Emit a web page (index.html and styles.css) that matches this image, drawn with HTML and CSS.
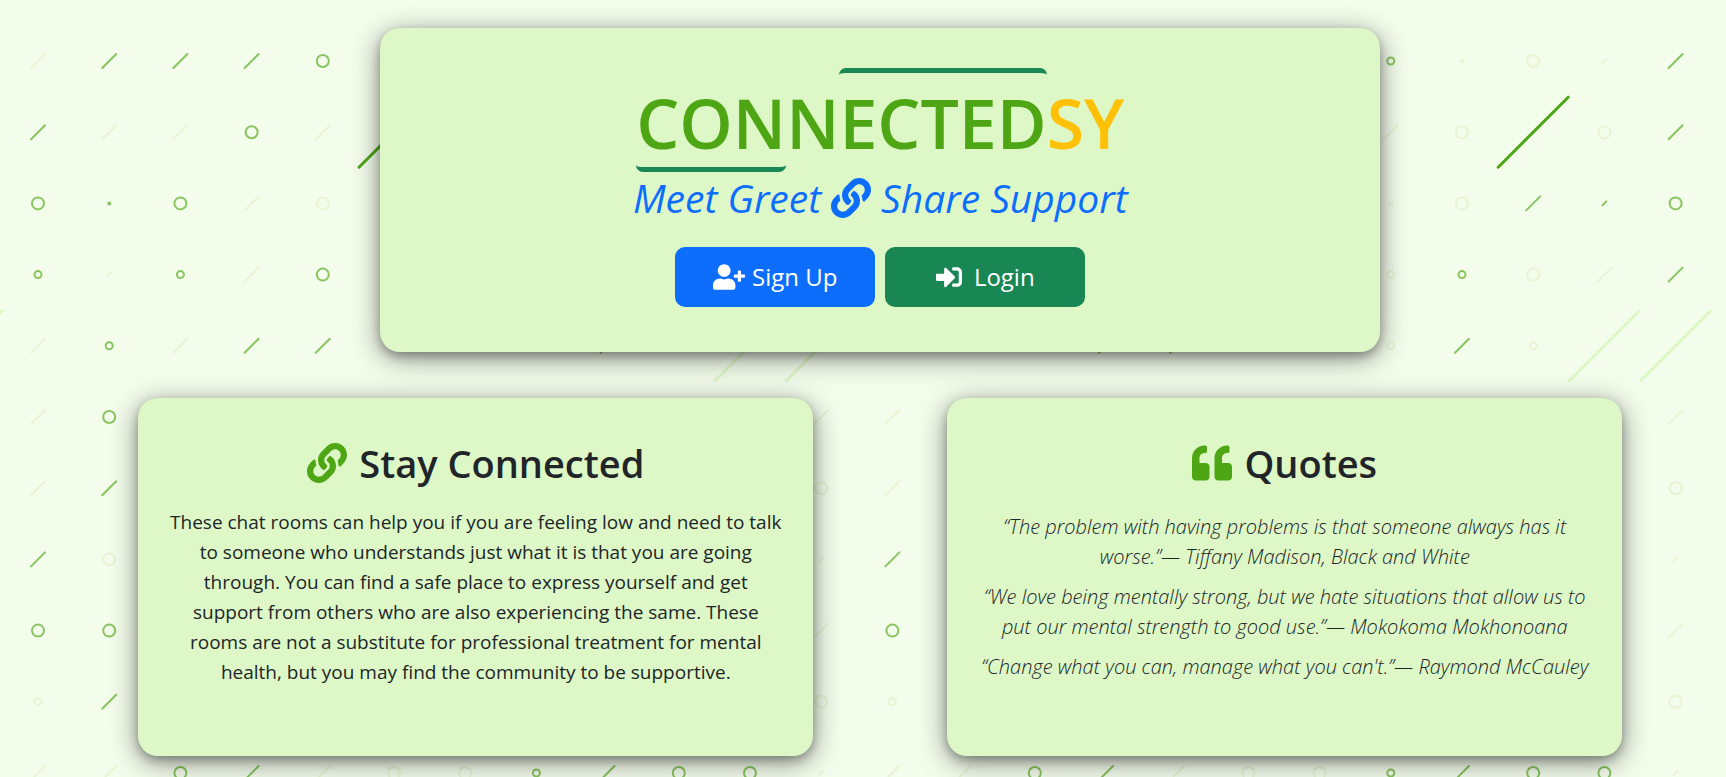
FILE: index.html
```html
<!DOCTYPE html>
<html lang="en">
<head>
<meta charset="utf-8">
<meta name="viewport" content="width=device-width, initial-scale=1">
<title>ConnectedSY</title>
<link rel="stylesheet" href="styles.css">
</head>
<body>
<svg class="pattern" aria-hidden="true">
  <defs>
    <path id="s" d="M-7 7L7 -7"/>
    <path id="t" d="M-2 2L2 -2"/>
    <circle id="c" r="6"/>
    <circle id="m" r="3.500"/>
    <circle id="d" r="1"/>
    <path id="b" d="M-35 35L35 -35"/>
  </defs>
  <g id="marks"></g>
</svg>

<main class="page">
  <section class="card hero">
    <h1 class="brand"><span class="brand-con">CON</span><span class="brand-mid">N</span><span class="brand-ected">ECTED</span><span class="brand-sy">SY</span></h1>
    <p class="tagline">Meet Greet
      <svg class="icon" viewBox="0 0 512 512" aria-hidden="true"><use href="#link-shape"/></svg>
      Share Support</p>
    <div class="actions">
      <button class="btn btn-signup" type="button"><svg class="icon-user" viewBox="0 0 640 512" aria-hidden="true"><path d="M624 208h-64v-64c0-8.800-7.200-16-16-16h-32c-8.800 0-16 7.200-16 16v64h-64c-8.800 0-16 7.200-16 16v32c0 8.800 7.200 16 16 16h64v64c0 8.800 7.200 16 16 16h32c8.800 0 16-7.200 16-16v-64h64c8.800 0 16-7.200 16-16v-32c0-8.800-7.200-16-16-16zm-400 48c70.700 0 128-57.300 128-128S294.700 0 224 0 96 57.300 96 128s57.300 128 128 128zm89.600 32h-16.700c-22.200 10.200-46.900 16-72.900 16s-50.600-5.800-72.900-16h-16.700C60.200 288 0 348.200 0 422.400V464c0 26.500 21.500 48 48 48h352c26.500 0 48-21.500 48-48v-41.600c0-74.200-60.200-134.400-134.400-134.400z"/></svg>Sign Up</button>
      <button class="btn btn-login" type="button"><svg class="icon-login" viewBox="0 0 512 512" aria-hidden="true"><path d="M416 448h-84c-6.600 0-12-5.400-12-12v-40c0-6.600 5.400-12 12-12h84c17.700 0 32-14.300 32-32V160c0-17.700-14.300-32-32-32h-84c-6.600 0-12-5.400-12-12V76c0-6.600 5.400-12 12-12h84c53 0 96 43 96 96v192c0 53-43 96-96 96zm-47-201L201 79c-15-15-41-4.500-41 17v96H24c-13.300 0-24 10.700-24 24v96c0 13.300 10.700 24 24 24h136v96c0 21.500 26 32 41 17l168-168c9.300-9.400 9.300-24.600 0-34z"/></svg>Login</button>
    </div>
  </section>

  <div class="columns">
    <section class="card panel">
      <h2><svg class="icon" viewBox="0 0 512 512" aria-hidden="true"><path id="link-shape" d="M326.612 185.391c59.747 59.809 58.927 155.698.36 214.590-.11.12-.24.25-.36.37l-67.200 67.200c-59.270 59.270-155.699 59.262-214.960 0-59.270-59.260-59.270-155.700 0-214.960l37.106-37.106c9.840-9.840 26.786-3.300 27.294 10.606.648 17.722 3.826 35.527 9.690 52.721 1.986 5.822.567 12.262-3.783 16.612l-13.087 13.087c-28.026 28.026-28.905 73.660-1.155 101.960 28.024 28.579 74.086 28.749 102.325.51l67.200-67.190c28.191-28.191 28.073-73.757 0-101.830-3.701-3.694-7.429-6.564-10.341-8.569a16.037 16.037 0 0 1-6.947-12.606c-.396-10.567 3.348-21.456 11.698-29.806l21.054-21.055c5.521-5.521 14.182-6.199 20.584-1.731a152.482 152.482 0 0 1 20.522 17.197zM467.547 44.449c-59.261-59.262-155.690-59.270-214.960 0l-67.200 67.200c-.12.12-.25.25-.36.37-58.566 58.892-59.387 154.781.36 214.590a152.454 152.454 0 0 0 20.521 17.196c6.402 4.468 15.064 3.789 20.584-1.731l21.054-21.055c8.350-8.350 12.094-19.239 11.698-29.806a16.037 16.037 0 0 0-6.947-12.606c-2.912-2.005-6.640-4.875-10.341-8.569-28.073-28.073-28.191-73.639 0-101.830l67.200-67.190c28.239-28.239 74.300-28.069 102.325.51 27.750 28.300 26.872 73.934-1.155 101.960l-13.087 13.087c-4.350 4.350-5.769 10.790-3.783 16.612 5.864 17.194 9.042 34.999 9.690 52.721.509 13.906 17.454 20.446 27.294 10.606l37.106-37.106c59.271-59.259 59.271-155.699.001-214.959z"/></svg>Stay Connected</h2>
      <p class="lead">These chat rooms can help you if you are feeling low and need to talk to someone who understands just what it is that you are going through. You can find a safe place to express yourself and get support from others who are also experiencing the same. These rooms are not a substitute for professional treatment for mental health, but you may find the community to be supportive.</p>
    </section>
    <section class="card panel">
      <h2><svg class="icon" viewBox="0 0 512 512" aria-hidden="true"><path d="M464 256h-80v-64c0-35.300 28.700-64 64-64h8c13.300 0 24-10.700 24-24V56c0-13.300-10.700-24-24-24h-8c-88.400 0-160 71.600-160 160v240c0 26.500 21.500 48 48 48h128c26.500 0 48-21.500 48-48V304c0-26.500-21.500-48-48-48zm-288 0H96v-64c0-35.300 28.700-64 64-64h8c13.300 0 24-10.700 24-24V56c0-13.300-10.700-24-24-24h-8C71.600 32 0 103.600 0 192v240c0 26.500 21.500 48 48 48h128c26.500 0 48-21.500 48-48V304c0-26.500-21.500-48-48-48z"/></svg>Quotes</h2>
      <ul class="quotes">
        <li>“The problem with having problems is that someone always has it worse.”— Tiffany Madison, Black and White</li>
        <li>“We love being mentally strong, but we hate situations that allow us to put our mental strength to good use.”— Mokokoma Mokhonoana</li>
        <li>“Change what you can, manage what you can't.”— Raymond McCauley</li>
      </ul>
    </section>
  </div>
</main>
<script src="pattern.js"></script>
</body>
</html>
```
FILE: styles.css
```css
* { box-sizing: border-box; }

body {
  margin: 0;
  min-height: 100vh;
  position: relative;
  overflow: hidden;
  background: #f4fdec;
  color: #212529;
  font-family: "Segoe UI", "Open Sans", "Noto Sans", sans-serif;
  text-align: center;
}

.pattern {
  position: absolute;
  inset: 0;
  width: 100%;
  height: 100%;
  fill: none;
  stroke-linecap: round;
}
.dark { stroke: #4fa614; stroke-width: 2; opacity: .65; }
.light { stroke: #e6f5d3; stroke-width: 2; }
.big-dark { stroke: #4fa614; stroke-width: 3; }
.big-light { stroke: #ddf8c6; stroke-width: 3; }

.page {
  position: relative;
  padding: 28px 6% 20px 8%;
}

.card {
  background: #ddf8c6;
  border-radius: 20px;
  box-shadow: 0 4px 10px rgba(0, 0, 0, .25), 0 6px 28px rgba(0, 0, 0, .45);
}

.hero {
  max-width: 1000px;
  margin: 0 auto 46px;
  padding: 40px 24px 45px;
}

.brand {
  display: flex;
  justify-content: center;
  margin: 0;
  color: #4fa614;
  font-size: 68px;
  font-weight: 600;
  line-height: 88px;
}
.brand span {
  padding-top: 6px;
  border-top: 5px solid transparent;
  border-bottom: 5px solid transparent;
}
.brand .brand-con {
  border-bottom-color: #198754;
  border-radius: 0 0 7px 7px;
}
.brand .brand-ected {
  border-top-color: #198754;
  border-radius: 7px 7px 0 0;
}
.brand-sy { color: #ffc107; }

.icon {
  width: 40px;
  height: 40px;
  fill: currentColor;
}

.tagline {
  display: flex;
  justify-content: center;
  align-items: center;
  gap: 10px;
  margin: 2px 0 25px;
  color: #0d6efd;
  font-size: 39px;
  font-style: italic;
  font-weight: 400;
  line-height: 48px;
}

.actions {
  display: flex;
  justify-content: center;
  gap: 10px;
}
.btn {
  display: flex;
  align-items: center;
  justify-content: center;
  width: 200px;
  height: 60px;
  padding: 0;
  border: 0;
  border-radius: 10px;
  color: #fff;
  font: 400 24px/36px "Segoe UI", "Open Sans", "Noto Sans", sans-serif;
}
.btn svg { fill: currentColor; }
.btn-signup { background: #0d6efd; }
.btn-login { background: #198754; }
.icon-user { width: 32px; height: 26px; margin-right: 7px; }
.icon-login { width: 26px; height: 26px; margin-right: 12px; }

.columns {
  display: grid;
  grid-template-columns: 5fr 5fr;
  gap: 9%;
}
.panel {
  min-height: 358px;
  padding: 41px 30px 64px;
}
h2 {
  display: flex;
  justify-content: center;
  align-items: center;
  gap: 12px;
  margin: 0;
  font-size: 38px;
  font-weight: 600;
  line-height: 48px;
}
h2 .icon { color: #4fa614; }
.lead, .quotes {
  font-size: 19px;
  font-weight: 400;
  line-height: 30px;
}
.lead { margin: 20px 0 0; }
.quotes {
  margin: 25px 0 0;
  padding: 0;
  list-style: none;
  font-size: 20px;
  font-style: italic;
  font-weight: 300;
}
.quotes li { margin-bottom: 10px; }
```
FILE: pattern.js
```js
// s: slash, t: short slash, c: circle, m: small circle, d: dot; capitals are the dark ones.
const rows = [
  "sSSSC..............MdctS",
  "SssCs..............sc.cS",
  "CDCsc..............dcSTC",
  "MtMsC..............mMcsS",
  "sMsSS...S......SS..mSm..",
  "sC.........ss..........s",
  "sS.........cs..........c",
  "Sc.........tS..........t",
  "CC.........sC..........s",
  "mS.........cm..........c",
  "ssCSsccMSCCtssCSsccMSCCt"
];
const originX = 38, originY = 61, step = 71.2;
const layer = document.getElementById("marks");

function mark(shape, cls, x, y) {
  const use = document.createElementNS("http://www.w3.org/2000/svg", "use");
  use.setAttribute("href", "#" + shape);
  use.setAttribute("class", cls);
  use.setAttribute("x", x);
  use.setAttribute("y", y);
  layer.append(use);
}

rows.forEach((row, r) => [...row].forEach((ch, c) => {
  if (ch === ".") return;
  const shape = ch.toLowerCase();
  mark(shape, ch === shape ? "light" : "dark", originX + c * step, originY + r * step);
}));

[[5, 1], [21, 1]].forEach(([c, r]) => mark("b", "big-dark", originX + c * step, originY + r * step));
[[-1, 4], [10, 4], [11, 4], [22, 4], [23, 4]].forEach(([c, r]) => mark("b", "big-light", originX + c * step, originY + r * step));
```
